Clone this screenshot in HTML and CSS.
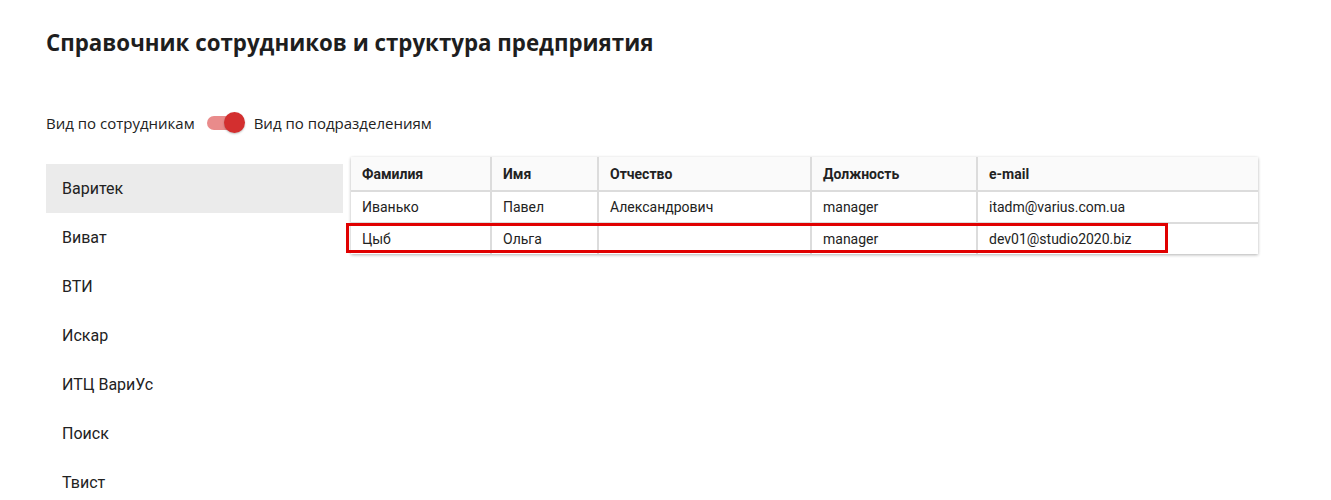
FILE: index.html
```html
<!DOCTYPE html>
<html lang="ru">
<head>
  <meta charset="UTF-8" />
  <title>Справочник сотрудников</title>
  <link rel="stylesheet" href="styles.css">
</head>
<body>
  <div class="page">
    <h1 class="title">Справочник сотрудников и структура предприятия</h1>

    <div class="view-switch">
      <span>Вид по сотрудникам</span>
      <span class="toggle"><span class="toggle-track"></span><span class="toggle-thumb"></span></span>
      <span>Вид по подразделениям</span>
    </div>

    <div class="content">
      <ul class="units">
        <li class="active">Варитек</li>
        <li>Виват</li>
        <li>ВТИ</li>
        <li>Искар</li>
        <li>ИТЦ ВариУс</li>
        <li>Поиск</li>
        <li>Твист</li>
      </ul>

      <div class="table-wrap">
        <table class="staff">
          <colgroup>
            <col class="c1">
            <col class="c2">
            <col class="c3">
            <col class="c4">
            <col>
          </colgroup>
          <thead>
            <tr>
              <th>Фамилия</th>
              <th>Имя</th>
              <th>Отчество</th>
              <th>Должность</th>
              <th>e-mail</th>
            </tr>
          </thead>
          <tbody>
            <tr>
              <td>Иванько</td>
              <td>Павел</td>
              <td>Александрович</td>
              <td>manager</td>
              <td>itadm@varius.com.ua</td>
            </tr>
            <tr>
              <td>Цыб</td>
              <td>Ольга</td>
              <td></td>
              <td>manager</td>
              <td>dev01@studio2020.biz</td>
            </tr>
          </tbody>
        </table>
        <!-- highlight frame over second row -->
        <div class="highlight"></div>
      </div>
    </div>
  </div>
</body>
</html>
```

FILE: styles.css
```css
body {
  margin: 0;
  background: #ffffff;
  color: #212121;
  font-family: Roboto, "Liberation Sans", sans-serif;
}

.page {
  padding: 27px 46px 0;
}

.title {
  margin: 0;
  font-family: "Open Sans", "Noto Sans", sans-serif;
  font-weight: 700;
  font-size: 22.3px;
  line-height: 32px;
  color: #1e1e1e;
}

.view-switch {
  margin-top: 51px;
  display: flex;
  align-items: center;
  font-family: "Open Sans", "Noto Sans", sans-serif;
  font-size: 15px;
  color: #222;
  height: 26px;
}

.toggle {
  position: relative;
  width: 38px;
  height: 22px;
  margin: 0 9px 0 12px;
  display: inline-block;
}

.toggle-track {
  position: absolute;
  left: 0;
  top: 4px;
  width: 34px;
  height: 14px;
  border-radius: 7px;
  background: #e98b8b;
}

.toggle-thumb {
  position: absolute;
  right: 0;
  top: 0;
  width: 21px;
  height: 21px;
  border-radius: 50%;
  background: #d32f2f;
  box-shadow: 0 1px 2px rgba(0, 0, 0, 0.25);
}

.content {
  margin-top: 28px;
  display: flex;
  align-items: flex-start;
  gap: 8px;
}

.units {
  list-style: none;
  margin: 0;
  padding: 0;
  width: 297px;
  flex: none;
}

.units li {
  height: 49px;
  line-height: 49px;
  padding-left: 16px;
  font-size: 16px;
  color: #222;
}

.units li.active {
  background: #ebebeb;
}

.table-wrap {
  position: relative;
  margin-top: -7px;
  width: 907px;
}

.staff {
  width: 100%;
  table-layout: fixed;
  border-collapse: collapse;
  box-shadow: 0 1px 3px rgba(0, 0, 0, 0.3);
  font-size: 14px;
  color: #222;
}

.staff .c1 { width: 140px; }
.staff .c2 { width: 107px; }
.staff .c3 { width: 213px; }
.staff .c4 { width: 166px; }

.staff th,
.staff td {
  text-align: left;
  padding: 0 11px;
  border-right: 2px solid #dcdcdc;
  border-bottom: 2px solid #dcdcdc;
}

.staff th:last-child,
.staff td:last-child {
  border-right: none;
}

.staff tbody tr:last-child td {
  border-bottom: none;
}

.staff th {
  height: 33px;
  font-weight: 700;
  background: #fafafa;
}

.staff td {
  height: 30px;
}

.highlight {
  position: absolute;
  left: -5px;
  top: 66px;
  width: 816px;
  height: 24px;
  border: 3px solid #e00000;
}
```
